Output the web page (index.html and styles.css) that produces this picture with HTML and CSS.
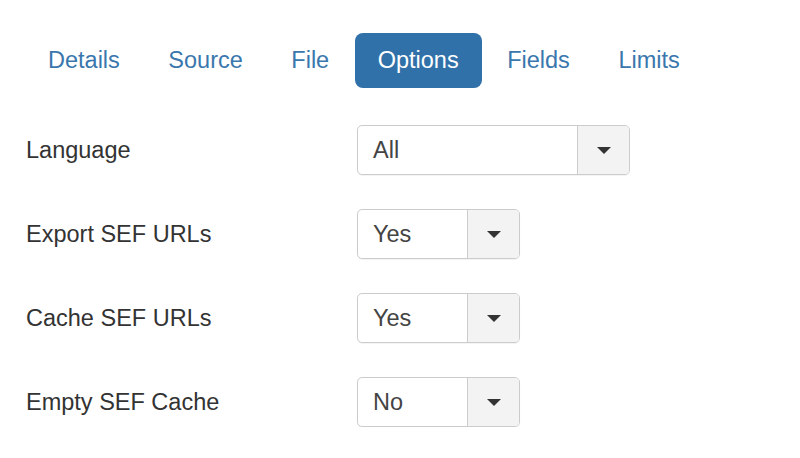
FILE: index.html
```html
<!DOCTYPE html>
<html>
<head>
<meta charset="utf-8">
<link rel="stylesheet" href="styles.css">
</head>
<body>
<div class="page">
  <ul class="tabs">
    <li class="tab">Details</li>
    <li class="tab">Source</li>
    <li class="tab">File</li>
    <li class="tab active">Options</li>
    <li class="tab">Fields</li>
    <li class="tab">Limits</li>
  </ul>
  <div class="form">
    <div class="row">
      <div class="label">Language</div>
      <div class="select wide"><span class="value">All</span><span class="btn"><span class="caret"></span></span></div>
    </div>
    <div class="row">
      <div class="label">Export SEF URLs</div>
      <div class="select"><span class="value">Yes</span><span class="btn"><span class="caret"></span></span></div>
    </div>
    <div class="row">
      <div class="label">Cache SEF URLs</div>
      <div class="select"><span class="value">Yes</span><span class="btn"><span class="caret"></span></span></div>
    </div>
    <div class="row">
      <div class="label">Empty SEF Cache</div>
      <div class="select"><span class="value">No</span><span class="btn"><span class="caret"></span></span></div>
    </div>
  </div>
</div>
</body>
</html>
```
FILE: styles.css
```css
html, body {
  margin: 0;
  padding: 0;
  background: #fff;
}
body {
  font-family: "Liberation Sans", Arial, sans-serif;
  font-size: 23.5px;
  color: #333;
}
.page {
  padding: 33px 0 0 25px;
}
.tabs {
  list-style: none;
  margin: 0;
  padding: 0;
  display: flex;
  gap: 2.5px;
}
.tab {
  padding: 11px 23px;
  line-height: 33px;
  color: #3a77ad;
  border-radius: 8px;
}
.tab.active {
  background: #3071a9;
  color: #fff;
}
.form {
  margin-top: 37px;
  display: flex;
  flex-direction: column;
  gap: 34px;
}
.row {
  display: flex;
  align-items: center;
  height: 50px;
}
.label {
  width: 331px;
  flex: none;
  padding-left: 1px;
  color: #333;
}
.select {
  display: flex;
  width: 163px;
  height: 50px;
  box-sizing: border-box;
  border: 1px solid #ccc;
  border-radius: 5px;
  overflow: hidden;
  box-shadow: 0 1px 1px rgba(0,0,0,0.05);
}
.select.wide {
  width: 273px;
}
.value {
  flex: 1;
  padding-left: 15px;
  line-height: 48px;
  color: #444;
}
.btn {
  width: 51px;
  flex: none;
  background: #f3f3f3;
  border-left: 1px solid #ccc;
  display: flex;
  align-items: center;
  justify-content: center;
}
.caret {
  width: 0;
  height: 0;
  border-left: 7px solid transparent;
  border-right: 7px solid transparent;
  border-top: 7px solid #333;
}
```
